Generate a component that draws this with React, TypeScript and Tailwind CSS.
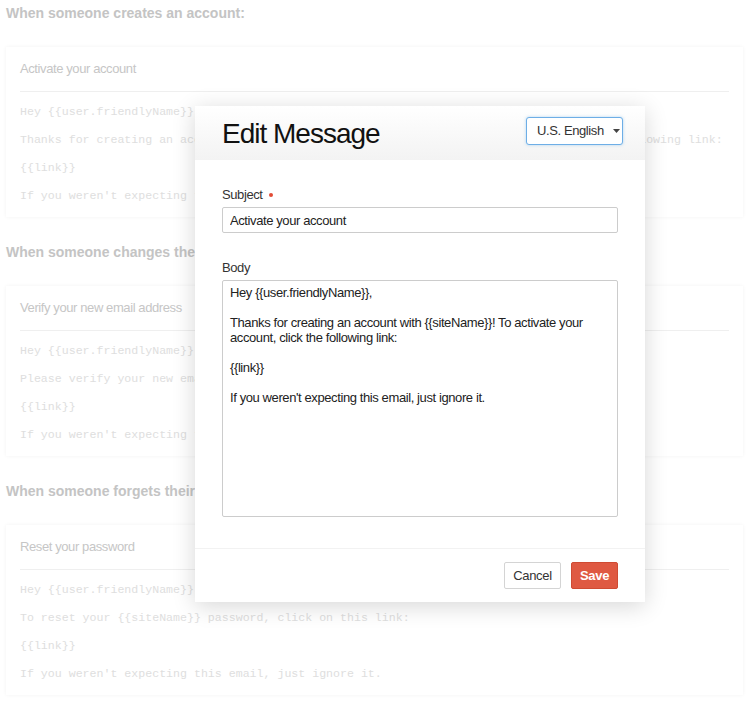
import React from 'react'

interface Template {
    heading: string;
    subject: string;
    lines: string[];
}

const templates: Template[] = [
    {
        heading: 'When someone creates an account:',
        subject: 'Activate your account',
        lines: [
            'Hey {{user.friendlyName}},',
            'Thanks for creating an account with {{siteName}}! To activate your account, click the following link:',
            '{{link}}',
            "If you weren't expecting this email, just ignore it.",
        ],
    },
    {
        heading: 'When someone changes their email address:',
        subject: 'Verify your new email address',
        lines: [
            'Hey {{user.friendlyName}},',
            'Please verify your new email address by clicking on this link:',
            '{{link}}',
            "If you weren't expecting this email, just ignore it.",
        ],
    },
    {
        heading: 'When someone forgets their password:',
        subject: 'Reset your password',
        lines: [
            'Hey {{user.friendlyName}},',
            'To reset your {{siteName}} password, click on this link:',
            '{{link}}',
            "If you weren't expecting this email, just ignore it.",
        ],
    },
]

const bodyText =
    'Hey {{user.friendlyName}},\n\nThanks for creating an account with {{siteName}}! To activate your\naccount, click the following link:\n\n{{link}}\n\nIf you weren\'t expecting this email, just ignore it.'

const sans = { fontFamily: '"Liberation Sans", Arial, sans-serif' }

const TemplateCard = ({ t }: { t: Template }) => (
    <div className="mb-[25px]">
        <h2 className="h-[20px] text-[14px] leading-[20px] font-bold text-[#c4c4c4]">{t.heading}</h2>
        <div className="mt-[24px] h-[170px] overflow-hidden bg-white px-[14px] pt-[12px] shadow-[0_0_4px_rgba(0,0,0,0.05)]">
            <div className="text-[13px] leading-[20px] tracking-[-0.4px] text-[#c6c6c6]">{t.subject}</div>
            <div className="mt-[12px] border-t border-[#efefef]" />
            <div className="pt-[6px] font-['Liberation_Mono',monospace] text-[11.6px] leading-[28px] text-[#dedede]">
                {t.lines.map((line, i) => (
                    <div key={i} className="whitespace-nowrap">{line}</div>
                ))}
            </div>
        </div>
    </div>
)

const EditModal = () => (
    <div className="absolute left-[195px] top-[106px] w-[450px] bg-white text-[#333] shadow-[0_4px_22px_rgba(0,0,0,0.16)]" style={sans}>
        {/* header */}
        <div className="flex h-[54px] items-start justify-between bg-gradient-to-b from-white to-[#f3f3f3] pl-[27px] pr-[22px]">
            <h1 className="mt-[12px] text-[28px] leading-[32px] tracking-[-1px] text-[#111]">Edit Message</h1>
            <button className="mt-[11px] flex h-[28px] w-[97px] items-center whitespace-nowrap rounded-[3px] border border-[#6eaee6] bg-white pl-[10px] text-[13px] tracking-[-0.4px] text-[#333] shadow-[0_0_3px_rgba(102,175,233,0.5)]">
                U.S. English
                <svg className="ml-[9px]" width="7" height="4" viewBox="0 0 7 4">
                    <path d="M0 0h7L3.5 4z" fill="#444" />
                </svg>
            </button>
        </div>
        {/* body */}
        <div className="px-[27px] pt-[26px] pb-[31px] tracking-[-0.4px]">
            <label className="flex h-[18px] items-center text-[13px] leading-[18px]">
                Subject
                <span className="ml-[6px] inline-block h-[4px] w-[4px] rounded-full bg-[#e24b35]" />
            </label>
            <input
                className="mt-[3px] block h-[26px] w-[396px] rounded-[2px] border border-[#cccccc] px-[7px] text-[13px] tracking-[-0.4px] text-[#222] outline-none"
                defaultValue="Activate your account"
                style={sans}
            />
            <label className="mt-[26px] block h-[18px] text-[13px] leading-[18px]">Body</label>
            <textarea
                className="mt-[3px] block h-[237px] w-[396px] resize-none overflow-hidden rounded-[2px] border border-[#cccccc] px-[7px] pt-[4px] text-[13px] leading-[15px] tracking-[-0.4px] text-[#222] outline-none"
                defaultValue={bodyText}
                style={sans}
            />
        </div>
        {/* footer */}
        <div className="flex h-[54px] items-center justify-end gap-[10px] border-t border-[#f2f2f2] pr-[27px] tracking-[-0.3px]">
            <button className="h-[27px] w-[57px] rounded-[2px] border border-[#d4d4d4] bg-white text-[13px] text-[#333]">Cancel</button>
            <button className="h-[27px] w-[47px] rounded-[2px] border border-[#cf4b33] bg-[#df5942] text-[13px] font-bold text-white">Save</button>
        </div>
    </div>
)

const App = () => {
    return (
        <div className="relative h-[703px] w-[754px] overflow-hidden bg-white" style={sans}>
            <div className="pl-[6px] pr-[11px] pt-[3px]">
                {templates.map((t) => (
                    <TemplateCard key={t.subject} t={t} />
                ))}
            </div>
            <EditModal />
        </div>
    )
}

export default App;
